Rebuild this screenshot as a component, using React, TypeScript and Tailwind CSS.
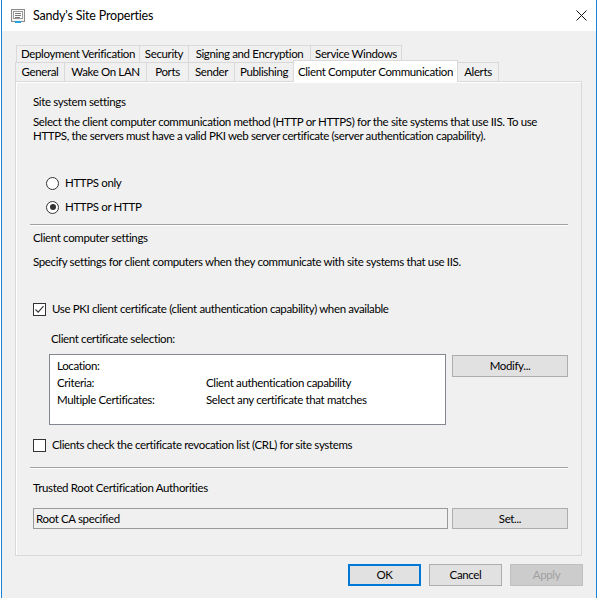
import React from 'react';

const row1 = [
  { label: 'Deployment Verification', w: 'w-[123px]' },
  { label: 'Security', w: 'w-[49px]' },
  { label: 'Signing and Encryption', w: 'w-[122px]' },
  { label: 'Service Windows', w: 'w-[92px]' },
];

const row2 = [
  { label: 'General', w: 'w-[49px]' },
  { label: 'Wake On LAN', w: 'w-[82px]' },
  { label: 'Ports', w: 'w-[42px]' },
  { label: 'Sender', w: 'w-[46px]' },
  { label: 'Publishing', w: 'w-[59px]' },
];

function Radio({ checked, label }: { checked?: boolean; label: string }) {
  return (
    <div className="flex items-center h-[16px] pl-[13px]">
      <span className="w-[13px] h-[13px] rounded-full border border-[#333333] bg-white flex items-center justify-center">
        {checked && <span className="w-[6px] h-[6px] rounded-full bg-[#333333]" />}
      </span>
      <span className="ml-[6px]">{label}</span>
    </div>
  );
}

function Checkbox({ checked, label }: { checked?: boolean; label: string }) {
  return (
    <div className="flex items-center h-[14px]">
      <span className="w-[13px] h-[13px] border border-[#333333] bg-white flex items-center justify-center shrink-0">
        {checked && (
          <svg width="11" height="11" viewBox="0 0 11 11">
            <path d="M1.5 5.5 L4.2 8.2 L9.5 2.2" fill="none" stroke="#333" strokeWidth="1.1" />
          </svg>
        )}
      </span>
      <span className="ml-[6px] whitespace-nowrap">{label}</span>
    </div>
  );
}

function Separator() {
  return <div className="-ml-[3px] w-[538px] h-[2px] border-t border-[#a0a0a0] border-b border-b-white" />;
}

function Button({ children, className = '' }: { children: React.ReactNode; className?: string }) {
  return (
    <div className={`flex items-center justify-center bg-[#e1e1e1] border border-[#adadad] ${className}`}>
      {children}
    </div>
  );
}

export default function App() {
  return (
    <div className="w-[599px] h-[598px] bg-white overflow-hidden font-['Lato','Liberation_Sans',sans-serif] text-[11.5px] tracking-[-0.36px] leading-[14px] text-black">
      <div className="ml-[1px] w-[596px] h-[598px] border-x border-[#1883d7] bg-[#f0f0f0]">
        {/* Title bar */}
        <div className="h-[31px] bg-white flex items-center">
          <svg className="ml-[9px]" width="14" height="14" viewBox="0 0 14 14">
            <rect x="0.5" y="0.5" width="13" height="12" fill="#f4f4f4" stroke="#8a8a8a" />
            <rect x="2.5" y="2.5" width="9" height="7" fill="#fff" stroke="#9a9a9a" />
            <line x1="4" y1="4.5" x2="10" y2="4.5" stroke="#7a7a7a" />
            <line x1="4" y1="6.5" x2="10" y2="6.5" stroke="#7a7a7a" />
            <line x1="4" y1="8.5" x2="9" y2="8.5" stroke="#7a7a7a" />
            <rect x="4" y="12" width="6" height="2" fill="#29a3dd" />
          </svg>
          <span className="ml-[8px] text-[12.5px] tracking-[-0.2px]">Sandy's Site Properties</span>
          <svg className="ml-auto mr-[9px]" width="11" height="11" viewBox="0 0 11 11">
            <path d="M0.5 0.5 L10.5 10.5 M10.5 0.5 L0.5 10.5" stroke="#111" strokeWidth="1" />
          </svg>
        </div>

        {/* Tabs */}
        <div className="pt-[14px]">
          <div className="flex ml-[14px] h-[17px]">
            {row1.map((t, i) => (
              <div
                key={t.label}
                className={`${t.w} h-[17px] flex items-center justify-center border-t border-l border-[#d9d9d9] whitespace-nowrap ${i === row1.length - 1 ? 'border-r' : ''}`}
              >
                {t.label}
              </div>
            ))}
          </div>
          <div className="flex items-end ml-[13px] h-[19px]">
            {row2.map((t) => (
              <div
                key={t.label}
                className={`${t.w} h-[19px] flex items-center justify-center border-t border-l border-[#d9d9d9] whitespace-nowrap`}
              >
                {t.label}
              </div>
            ))}
            <div className="relative z-10 w-[165px] h-[22px] -mb-[1px] flex items-start pt-[4px] justify-center bg-white border-t border-x border-[#d9d9d9] whitespace-nowrap">
              Client Computer Communication
            </div>
            <div className="w-[41px] h-[19px] flex items-center justify-center border-t border-r border-[#d9d9d9] whitespace-nowrap">
              Alerts
            </div>
          </div>

          {/* Panel */}
          <div className="ml-[13px] w-[567px] h-[475px] border border-[#d9d9d9] shadow-[inset_1px_1px_0_#ffffff] pt-[13px] pl-[17px] flex flex-col">
            <div>Site system settings</div>
            <div className="mt-[6px] whitespace-nowrap">
              <div>Select the client computer communication method (HTTP or HTTPS) for the site systems that use IIS. To use</div>
              <div>HTTPS, the servers must have a valid PKI web server certificate (server authentication capability).</div>
            </div>
            <div className="mt-[32px]">
              <Radio label="HTTPS only" />
            </div>
            <div className="mt-[8px]">
              <Radio label="HTTPS or HTTP" checked />
            </div>
            <div className="mt-[9px]">
              <Separator />
            </div>
            <div className="mt-[5px]">Client computer settings</div>
            <div className="mt-[10px]">Specify settings for client computers when they communicate with site systems that use IIS.</div>
            <div className="mt-[33px]">
              <Checkbox checked label="Use PKI client certificate (client authentication capability) when available" />
            </div>
            <div className="mt-[16px] ml-[18px]">Client certificate selection:</div>
            <div className="mt-[8px] ml-[16px] flex items-start">
              <div className="w-[397px] h-[71px] bg-white border border-[#828790] pt-[3px] pl-[7px]">
                <div className="flex h-[16px] items-center">
                  <span className="w-[149px]">Location:</span>
                </div>
                <div className="flex h-[17px] items-center">
                  <span className="w-[149px]">Criteria:</span>
                  <span>Client authentication capability</span>
                </div>
                <div className="flex h-[17px] items-center">
                  <span className="w-[149px]">Multiple Certificates:</span>
                  <span>Select any certificate that matches</span>
                </div>
              </div>
              <Button className="ml-[6px] mt-[1px] w-[116px] h-[22px]">Modify...</Button>
            </div>
            <div className="mt-[13px]">
              <Checkbox label="Clients check the certificate revocation list (CRL) for site systems" />
            </div>
            <div className="mt-[15px]">
              <Separator />
            </div>
            <div className="mt-[12px]">Trusted Root Certification Authorities</div>
            <div className="mt-[13px] flex items-start">
              <div className="w-[415px] h-[21px] border border-[#999999] flex items-center pl-[2px]">Root CA specified</div>
              <Button className="ml-[4px] w-[116px] h-[21px]">Set...</Button>
            </div>
          </div>

          {/* Dialog buttons */}
          <div className="mt-[8px] ml-[346px] flex gap-[8px]">
            <Button className="w-[73px] h-[22px] !border-2 !border-[#0078d7]">OK</Button>
            <Button className="w-[73px] h-[22px]">Cancel</Button>
            <div className="w-[73px] h-[22px] flex items-center justify-center bg-[#cccccc] border border-[#bfbfbf] text-[#a0a0a0]">
              Apply
            </div>
          </div>
        </div>
      </div>
    </div>
  );
}
